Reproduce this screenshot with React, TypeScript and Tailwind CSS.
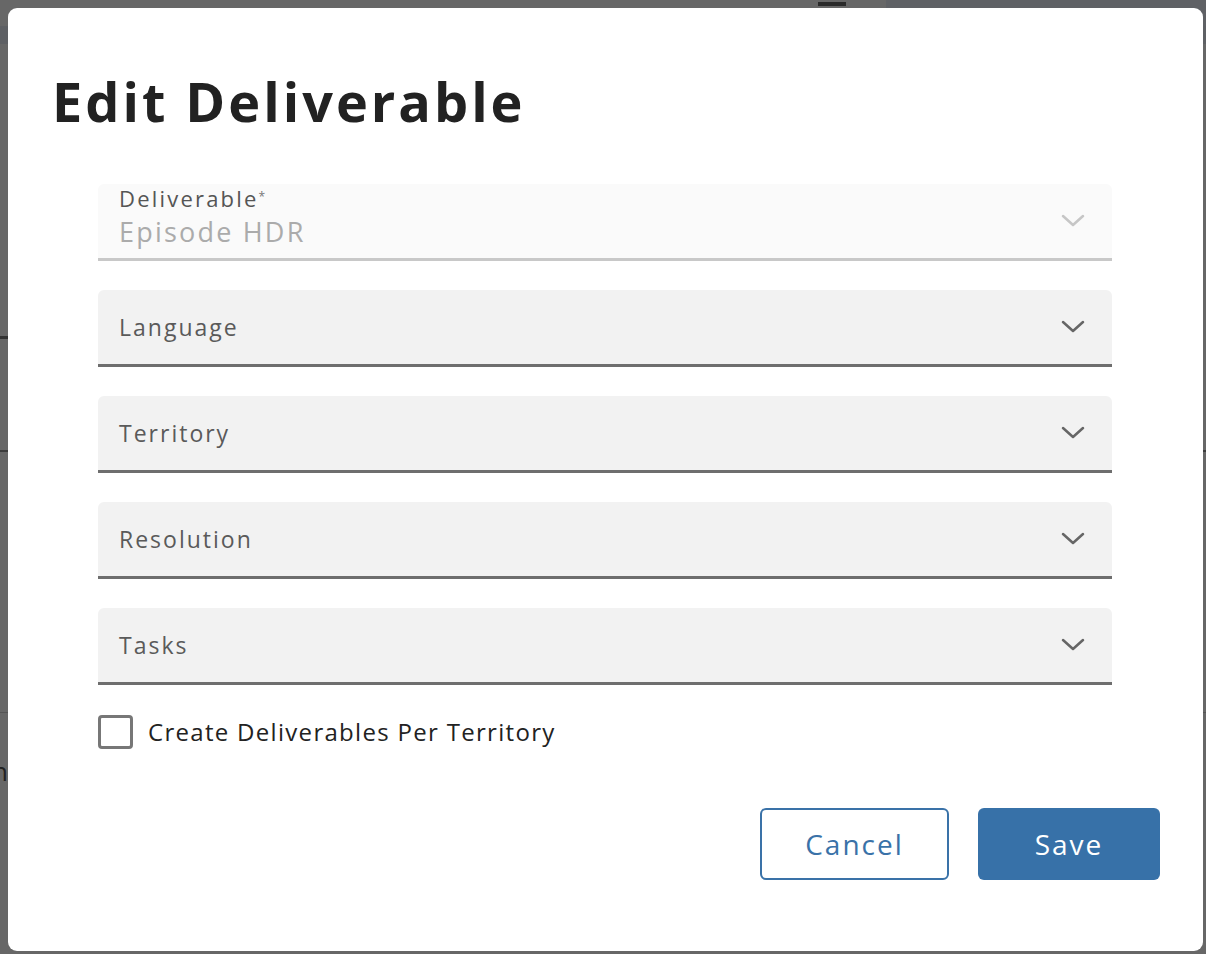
import React from "react";

const font = { fontFamily: '"Open Sans", "Liberation Sans", sans-serif' };

function Chevron({ muted }: { muted?: boolean }) {
  return (
    <svg width="24" height="14" viewBox="0 0 24 14" fill="none">
      <path
        d="M2 2 L12 11 L22 2"
        stroke={muted ? "#c6c6c6" : "#666666"}
        strokeWidth="2.5"
        strokeLinecap="round"
        strokeLinejoin="round"
      />
    </svg>
  );
}

function SelectField({ label }: { label: string }) {
  return (
    <div className="flex h-[77px] items-center justify-between rounded-t-[6px] border-b-[3px] border-[#6e6e6e] bg-[#f2f2f2] pl-[21px] pr-[27px]">
      <span className="text-[23px] tracking-[2px] text-[#5a5a5a]">{label}</span>
      <Chevron />
    </div>
  );
}

export default function App() {
  return (
    <div className="relative h-[954px] w-full overflow-hidden bg-[#676767]" style={font}>
      {/* page underneath the overlay */}
      <div className="absolute left-[886px] top-0 h-[28px] w-[320px] bg-[#5f6165]" />
      <div className="absolute left-[818px] top-[2px] h-[4px] w-[28px] bg-[#2a2a2a]" />
      <div className="absolute left-0 top-[26px] h-[18px] w-full bg-[#5e6064]" />
      <div className="absolute left-0 top-[336px] h-[3px] w-[8px] bg-[#333]" />
      <div className="absolute left-0 top-[450px] h-[2px] w-full bg-[#3c3c3c]" />
      <div className="absolute left-0 top-[712px] h-[1px] w-full bg-[#555]" />
      <span className="absolute left-[-8px] top-[752px] text-[26px] text-[#222]">n</span>

      <div className="absolute bottom-[3px] left-[8px] right-[3px] top-[8px] rounded-[9px] bg-white">
        <div className="pl-[44px] pt-[66px]">
          <h1 className="text-[54px] font-bold leading-none tracking-[3px] text-[#222222]">
            Edit Deliverable
          </h1>
        </div>

        <div className="mt-[56px] flex flex-col gap-[29px] pl-[90px] pr-[91px]">
          <div className="flex h-[77px] items-center justify-between rounded-t-[6px] border-b-[3px] border-[#c8c8c8] bg-[#fafafa] pl-[21px] pr-[27px]">
            <div className="-mt-[1px] flex flex-col self-start">
              <span className="text-[22px] leading-[30px] tracking-[2.2px] text-[#555555]">
                Deliverable<sup className="text-[12px] tracking-normal text-[#777]">*</sup>
              </span>
              <span className="text-[27px] leading-[37px] tracking-[2.2px] text-[#ababab]">
                Episode HDR
              </span>
            </div>
            <Chevron muted />
          </div>
          <SelectField label="Language" />
          <SelectField label="Territory" />
          <SelectField label="Resolution" />
          <SelectField label="Tasks" />
        </div>

        <div className="mt-[29px] flex items-center gap-[15px] pl-[90px]">
          <div className="h-[34px] w-[35px] rounded-[4px] border-[3px] border-[#777777] bg-white" />
          <span className="text-[24px] tracking-[1.3px] text-[#222222]">
            Create Deliverables Per Territory
          </span>
        </div>

        <div className="mt-[58px] flex justify-end gap-[29px] pr-[43px]">
          <button className="h-[72px] w-[189px] rounded-[6px] border-2 border-[#3a72a8] bg-white text-[28px] tracking-[2px] text-[#3a72a8]">
            Cancel
          </button>
          <button className="h-[72px] w-[182px] rounded-[6px] bg-[#3771a8] text-[28px] tracking-[2px] text-white">
            Save
          </button>
        </div>
      </div>
    </div>
  );
}
